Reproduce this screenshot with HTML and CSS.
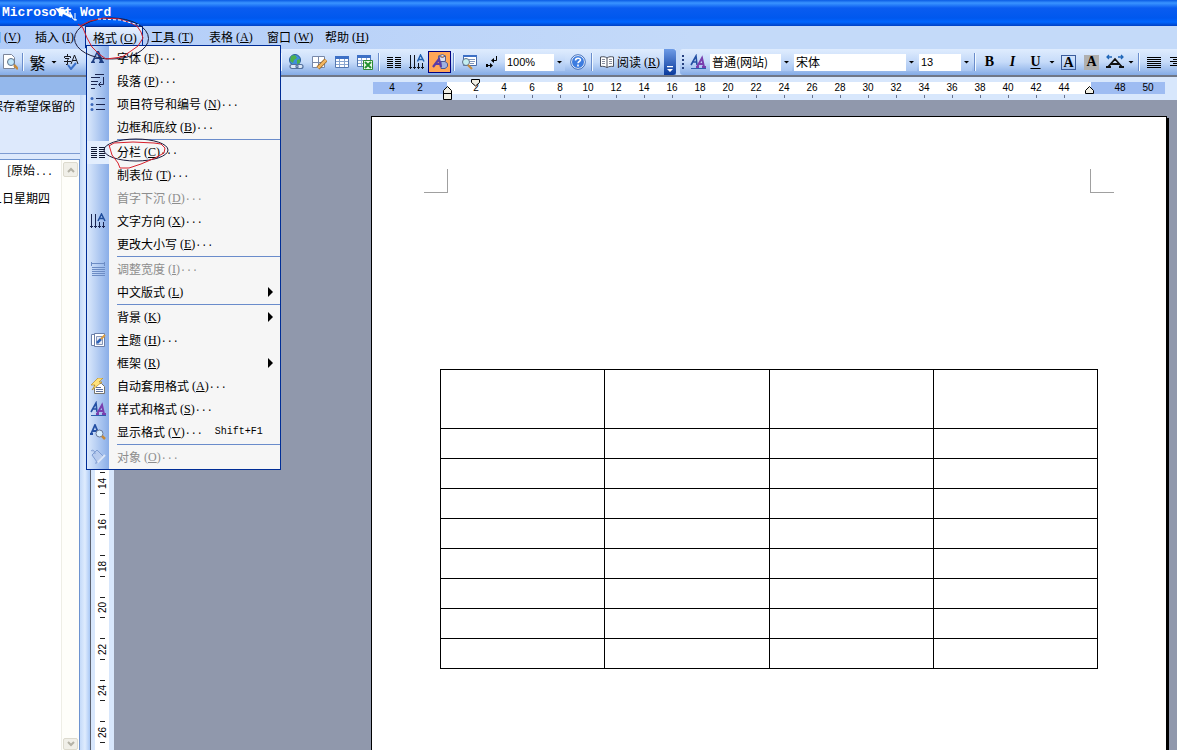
FILE: index.html
```
<!DOCTYPE html>
<html lang="zh-CN">
<head>
<meta charset="utf-8">
<title>Microsoft Word</title>
<link rel="stylesheet" href="styles.css">
</head>
<body>
<header class="titlebar"><h1>Microsoft Word</h1></header>

<nav class="menubar">
  <div class="menubar-item"><button>图<span class="key">(<u>V</u>)</span></button></div>
  <div class="menubar-item"><button>插入<span class="key">(<u>I</u>)</span></button></div>
  <div class="menubar-item open"><button>格式<span class="key">(<u>O</u>)</span></button>
    <div class="menu">
      <button><span class="ico"><svg viewBox="0 0 16 16"><path fill="#1f3f84" d="M1 13v-1l1-1 5-10h2l4 10 1 1v1H9v-1l1-1-1-2H5l-1 2 1 1v1zM5 8h4L7 4z"/></svg></span>字体<span class="key">(<u>F</u>)</span><span class="dots">...</span></button>
      <button><span class="ico"><svg viewBox="0 0 16 16"><path fill="none" stroke="#1a2550" d="M5 1.500h9M1 4.500h9M1 8.500h7M1 11.500h6M5 15.500h-4M13.500 4v7.500H9M11 9l-2.500 2.500L11 14"/></svg></span>段落<span class="key">(<u>P</u>)</span><span class="dots">...</span></button>
      <button><span class="ico"><svg viewBox="0 0 16 16"><path stroke="#1a2550" d="M6 2.500h9M6 8.500h9M6 13.500h9"/><g fill="#3c68ba"><circle cx="2" cy="2.500" r="1.500"/><circle cx="2" cy="8.500" r="1.500"/><circle cx="2" cy="13.500" r="1.500"/></g></svg></span>项目符号和编号<span class="key">(<u>N</u>)</span><span class="dots">...</span></button>
      <button>边框和底纹<span class="key">(<u>B</u>)</span><span class="dots">...</span></button>
      <hr>
      <button class="current"><span class="ico"><svg viewBox="0 0 16 16"><path stroke="#101830" d="M1 3.500h6M1 5.500h6M1 7.500h6M1 9.500h6M1 11.500h6M1 13.500h6M9 3.500h6M9 5.500h6M9 7.500h6M9 9.500h6M9 11.500h6M9 13.500h6"/></svg></span>分栏<span class="key">(<u>C</u>)</span><span class="dots">...</span></button>
      <button>制表位<span class="key">(<u>T</u>)</span><span class="dots">...</span></button>
      <button disabled>首字下沉<span class="key">(<u>D</u>)</span><span class="dots">...</span></button>
      <button><span class="ico"><svg viewBox="0 0 16 16"><path fill="none" stroke="#1a2550" d="M1.500 1v14M5.500 1v14M9.500 9v6M13.500 9v6M0 13.500h3M4 13.500h3M8 13.500h3M12 13.500h3"/><path fill="none" stroke="#1f4d9c" stroke-width="1.500" d="M8 8l3.500-7L15 8M9.500 5.500h4"/></svg></span>文字方向<span class="key">(<u>X</u>)</span><span class="dots">...</span></button>
      <button>更改大小写<span class="key">(<u>E</u>)</span><span class="dots">...</span></button>
      <hr>
      <button disabled><span class="ico"><svg viewBox="0 0 16 16"><path fill="none" stroke="#6c8cc4" d="M1.500 1v4M14.500 1v4M2 2.500h12M2 6.500h13M2 8.500h13M2 10.500h13M2 12.500h13M2 14.500h13"/></svg></span>调整宽度<span class="key">(<u>I</u>)</span><span class="dots">...</span></button>
      <button class="sub">中文版式<span class="key">(<u>L</u>)</span></button>
      <hr>
      <button class="sub">背景<span class="key">(<u>K</u>)</span></button>
      <button><span class="ico"><svg viewBox="0 0 16 16"><path fill="#fff" stroke="#6b7fa8" d="M1.500 2.500h3v11h-3zM4.500 1.500h10v13h-10z"/><path fill="#e8ecf6" stroke="#8796b8" d="M6.500 4.500h6v8h-6z"/><path stroke="#2d62b8" stroke-width="2.500" d="M7 11l4-4"/><path stroke="#d99a3e" stroke-width="2" d="M11 7l4-4"/></svg></span>主题<span class="key">(<u>H</u>)</span><span class="dots">...</span></button>
      <button class="sub">框架<span class="key">(<u>R</u>)</span></button>
      <button><span class="ico"><svg viewBox="0 0 16 16"><path fill="#fff" stroke="#77746a" d="M4.500 5.500h7l3 3v7h-10z"/><path stroke="#5b6f9c" d="M6 9.500h5M6 11.500h7M6 13.500h7"/><path fill="#ffe27a" stroke="#b98a1e" stroke-width=".7" d="M8 0h5L9 4h3L2 12l3-5H1z"/></svg></span>自动套用格式<span class="key">(<u>A</u>)</span><span class="dots">...</span></button>
      <button><span class="ico"><svg viewBox="0 0 16 16"><path fill="none" stroke="#2450a4" stroke-width="1.600" d="M1 11l5-9 1 9M3 8h4"/><path fill="none" stroke="#7a3fae" stroke-width="2" d="M7 13l5-9 2 9M9 10h5M6 13h3M12 13h4"/><path stroke="#2d5fae" d="M1 14.500h15"/></svg></span>样式和格式<span class="key">(<u>S</u>)</span><span class="dots">...</span></button>
      <button><span class="ico"><svg viewBox="0 0 16 16"><path fill="none" stroke="#2450a4" stroke-width="1.800" d="M1 10l4-9 3 7M3 7h4M0 10h3"/><circle cx="9.500" cy="9.500" r="3.500" fill="#d9efff" stroke="#6a7896"/><path stroke="#c58a3a" stroke-width="2.500" d="M12 12l3 3"/></svg></span>显示格式<span class="key">(<u>V</u>)</span><span class="dots">...</span><kbd>Shift+F1</kbd></button>
      <hr>
      <button disabled><span class="ico"><svg viewBox="0 0 16 16"><path fill="#b7cbee" stroke="#7f9dd2" d="M2 6l5-5 6 6-6 6zM1 2c2-2 4 0 4 3"/><path stroke="#dce7f8" stroke-width="2" d="M7 14l8-8"/><path fill="#8aa5d6" d="M5 15l1-3 2 2z"/></svg></span>对象<span class="key">(<u>O</u>)</span><span class="dots">...</span></button>
    </div>
  </div>
  <div class="menubar-item"><button>工具<span class="key">(<u>T</u>)</span></button></div>
  <div class="menubar-item"><button>表格<span class="key">(<u>A</u>)</span></button></div>
  <div class="menubar-item"><button>窗口<span class="key">(<u>W</u>)</span></button></div>
  <div class="menubar-item"><button>帮助<span class="key">(<u>H</u>)</span></button></div>
</nav>

<div class="toolbars">
  <div class="toolbar standard">
    <button class="tool first" aria-label="打印预览"><svg viewBox="0 0 16 16"><path fill="#fff" stroke="#7c8599" d="M1.500.5h8l3 3v11h-11z"/><circle cx="9" cy="8" r="3.500" fill="#bfe6fa" stroke="#5e7088"/><path stroke="#c58a3a" stroke-width="2.500" d="M12 11l4 4"/></svg></button>
    <span class="sep"></span>
    <button class="tool trad" aria-label="中文简繁转换">繁</button>
    <button class="drop" aria-label="更多"></button>
    <button class="tool" aria-label="拼写和语法"><svg viewBox="0 0 16 16"><path fill="none" stroke="#16181f" d="M4.500 0v2M1.500 4V2.500h6V4M2 4.500h4L4.500 6v4.500H3M1 7.500h7M8 10l3.500-9L15 10M9.500 6.500h4"/><path fill="none" stroke="#3a70c8" stroke-width="2" d="M5 11l3 4 5-6"/></svg></button>
    <span class="covered"></span>
    <span class="sep"></span>
    <button class="tool" aria-label="超链接"><svg viewBox="0 0 16 16"><circle cx="7" cy="6" r="5.500" fill="#3f8edb" stroke="#2a5f9a"/><path fill="#4cb04c" d="M3 2l4-1 2 3-3 2-1 3-3-2zM9 6l3-1v4l-3 1z"/><path fill="#dce8f8" stroke="#53709c" stroke-width="1.200" d="M4 10.500h4a2 2 0 010 4H4a2 2 0 010-4zM10 10.500h3a2 2 0 010 4h-3a2 2 0 010-4z"/></svg></button>
    <button class="tool" aria-label="表格和边框"><svg viewBox="0 0 16 16"><path fill="#fff" stroke="#7888a8" d="M1.500 2.500h12v11h-12zM7.500 2.500v11M1.500 8.500h12"/><path stroke="#8a5a20" stroke-width="4" d="M7 14l8-8"/><path stroke="#f2b661" stroke-width="2.500" d="M7 14l8-8"/></svg></button>
    <button class="tool" aria-label="插入表格"><svg viewBox="0 0 16 16"><path fill="#fff" stroke="#5477b0" d="M1.500 2.500h13v11h-13z"/><path fill="#3d70c6" d="M1 2h14v3H1z"/><path stroke="#8aa6d0" d="M5.500 5v8M10.500 5v8M2 7.500h12M2 10.500h12"/></svg></button>
    <button class="tool" aria-label="插入 Excel 工作表"><svg viewBox="0 0 16 16"><path fill="#fff" stroke="#5477b0" d="M.5 1.500h13v11H.5z"/><path fill="#3d70c6" d="M0 1h14v3H0z"/><path stroke="#8aa6d0" d="M4.500 4v8M9.500 4v8M1 6.500h12M1 9.500h12"/><path fill="#effaeb" stroke="#2d8a34" d="M6.500 6.500h9v9h-9z"/><path stroke="#249130" stroke-width="2" d="M8 8l6 6M14 8l-6 6"/></svg></button>
    <span class="sep"></span>
    <button class="tool" aria-label="分栏"><svg viewBox="0 0 16 16"><path stroke="#000" d="M1 3.500h6M1 5.500h6M1 7.500h6M1 9.500h6M1 11.500h6M1 13.500h6M9 3.500h6M9 5.500h6M9 7.500h6M9 9.500h6M9 11.500h6M9 13.500h6"/></svg></button>
    <button class="tool" aria-label="更改文字方向"><svg viewBox="0 0 16 16"><path fill="none" stroke="#10151f" d="M1.500 1v14M5.500 1v14M9.500 9v6M13.500 9v6M0 13.500h3M4 13.500h3M8 13.500h3M12 13.500h3"/><path fill="none" stroke="#1f5fb0" stroke-width="1.500" d="M8.500 7.500l3-6.500L15 7.500M10 5.500h4"/></svg></button>
    <button class="tool pressed" aria-label="绘图"><svg viewBox="0 0 16 16"><path fill="#d9ddf0" stroke="#5a628c" d="M6.500 2l4-1.500 3 1.500v5l-3 1-4-1zM6.500 2l4 1.500 3-1.500"/><path fill="#9fb0e0" stroke="#4c5a94" d="M9 7.500h4l2.500 2v3l-2.500 2H9z"/><path fill="none" stroke="#5a3ca8" stroke-width="2.200" d="M1 13l6-8 2 8M4 10h4"/></svg></button>
    <span class="sep"></span>
    <button class="tool" aria-label="文档结构图"><svg viewBox="0 0 16 16"><path fill="#fff" stroke="#4a6ca8" d="M2.500 1.500h13v10h-13z"/><path fill="#3d70c6" d="M2 1h14v2H2z"/><path stroke="#7f96bd" d="M8 5.500h6M9 7.500h5M9 9.500h4"/><circle cx="5" cy="8" r="3.500" fill="#c4eef0" stroke="#5e7088"/><path stroke="#c58a3a" stroke-width="2.200" d="M7 11l4 4"/></svg></button>
    <button class="tool" aria-label="显示编辑标记"><svg viewBox="0 0 16 16"><path fill="none" stroke="#000" d="M12.500 2v4.500H8M2 11.500h6"/><path d="M10 4v5L7 6.500zM6 9v5l3-2.500zM2 10h2v3H2z"/></svg></button>
    <label class="combo zoom"><select aria-label="显示比例"><option>100%</option></select></label>
    <button class="tool" aria-label="帮助"><svg viewBox="0 0 16 16"><circle cx="8" cy="8" r="6.500" fill="#3c7ce0" stroke="#fff"/><circle cx="8" cy="8" r="7.300" fill="none" stroke="#2355ac" stroke-width=".8"/><path fill="none" stroke="#fff" stroke-width="1.600" d="M5.500 6.500c0-3 5-3 5-.5 0 1.500-2.500 1.500-2.500 3.200M8 10.500v2"/></svg></button>
    <span class="sep"></span>
    <button class="read"><svg viewBox="0 0 16 16"><path fill="#fff" stroke="#4a4f5c" d="M8 4c-2-1.500-4-1.500-6.500-1v9.500c2.500-.5 4.500 0 6.500 1 2-1 4-1.500 6.500-1V3C12 2.500 10 2.500 8 4v9.500"/><path stroke="#8a90a0" d="M3 5.500h3M3 7.500h3M3 9.500h3M10 5.500h3M10 7.500h3M10 9.500h3"/></svg>阅读<span class="key">(<u>R</u>)</span></button>
    <button class="cap" aria-label="工具栏选项"></button>
  </div>
  <div class="toolbar formatting">
    <span class="grip"></span>
    <button class="tool" aria-label="格式窗格"><svg viewBox="0 0 16 16"><path fill="none" stroke="#2450a4" stroke-width="1.600" d="M1 11l5-9 1 9M3 8h4"/><path fill="none" stroke="#7a3fae" stroke-width="2" d="M7 13l5-9 2 9M9 10h5M6 13h3M12 13h4"/><path stroke="#2d5fae" d="M1 14.500h15"/></svg></button>
    <label class="combo style"><select aria-label="样式"><option>普通(网站)</option></select></label>
    <label class="combo font"><select aria-label="字体"><option>宋体</option></select></label>
    <label class="combo size"><select aria-label="字号"><option>13</option></select></label>
    <span class="sep"></span>
    <button class="tool letter bold">B</button>
    <button class="tool letter italic">I</button>
    <button class="tool letter under">U</button>
    <button class="drop" aria-label="下划线样式"></button>
    <button class="tool letter"><span class="boxed">A</span></button>
    <button class="tool letter"><span class="shaded">A</span></button>
    <button class="tool" aria-label="字符缩放"><svg class="wide" viewBox="0 0 18 16"><path fill="none" stroke="#111" stroke-width="1.800" d="M2 13l7-8 7 8M5 10h8M0 13h5M13 13h5"/><path fill="none" stroke="#1f66b8" stroke-width="1.300" d="M1 3h5M3 1L1 3l2 2M12 3h5M15 1l2 2-2 2"/></svg></button>
    <button class="drop" aria-label="缩放比例"></button>
    <span class="sep"></span>
    <button class="tool" aria-label="两端对齐"><svg viewBox="0 0 16 16"><path stroke="#000" d="M1 3.500h14M1 5.500h14M1 7.500h14M1 9.500h14M1 11.500h14M1 13.500h14"/></svg></button>
    <button class="tool" aria-label="居中"><svg viewBox="0 0 16 16"><path stroke="#000" d="M1 3.500h14M4 5.500h8M1 7.500h14M4 9.500h8M1 11.500h14"/></svg></button>
  </div>
</div>

<div class="workspace">
  <aside class="pane">
    <div class="pane-head"></div>
    <p class="pane-tip"><span>保存希望保留的</span></p>
    <div class="pane-list">
      <div class="pane-files">
        <p><span>[原始<span class="dots">...</span></span></p>
        <p><span>1日星期四</span></p>
      </div>
      <div class="scroll">
        <button aria-label="向上滚动"><svg viewBox="0 0 8 6"><path d="M1 5l3-3 3 3"/></svg></button>
        <button aria-label="向下滚动"><svg viewBox="0 0 8 6"><path d="M1 1l3 3 3-3"/></svg></button>
      </div>
    </div>
  </aside>
  <main class="editor">
    <div class="ruler">
      <div class="margin left"><i>4</i><i>2</i></div>
      <div class="measure"><i>2</i><i>4</i><i>6</i><i>8</i><i>10</i><i>12</i><i>14</i><i>16</i><i>18</i><i>20</i><i>22</i><i>24</i><i>26</i><i>28</i><i>30</i><i>32</i><i>34</i><i>36</i><i>38</i><i>40</i><i>42</i><i>44</i>
        <svg class="mark hanging" viewBox="0 0 10 16"><path d="M.5 14.500v-9L4.500 1.500l4 4v9zM.5 8.500h8"/></svg>
        <svg class="mark indent" viewBox="0 0 10 8"><path d="M.5.5h8v3l-4 3.500-4-3.500z"/></svg>
        <svg class="mark right" viewBox="0 0 10 8"><path d="M.5 7.500v-3L4.500.5l4 4v3z"/></svg>
      </div>
      <div class="margin"><i>48</i><i>50</i></div>
    </div>
    <div class="view">
      <div class="vruler"><div class="vscale"><i>14</i><i>16</i><i>18</i><i>20</i><i>22</i><i>24</i><i>26</i></div></div>
      <div class="canvas">
        <article class="page">
          <div class="corners"><span class="corner"></span><span class="corner mirror"></span></div>
          <table>
            <tr class="tall"><td></td><td></td><td></td><td></td></tr>
            <tr><td></td><td></td><td></td><td></td></tr>
            <tr><td></td><td></td><td></td><td></td></tr>
            <tr><td></td><td></td><td></td><td></td></tr>
            <tr><td></td><td></td><td></td><td></td></tr>
            <tr><td></td><td></td><td></td><td></td></tr>
            <tr><td></td><td></td><td></td><td></td></tr>
            <tr><td></td><td></td><td></td><td></td></tr>
            <tr><td></td><td></td><td></td><td></td></tr>
          </table>
        </article>
      </div>
    </div>
  </main>
</div>

<svg class="ink" viewBox="0 0 180 180">
  <path fill="#fff" stroke="none" d="M55 8l13 2-3 2 8 4-2 2-8-4-1 3z"/>
  <path stroke="#fff" d="M66 9l6 7M70 12l3 7 4 1M75 13v8"/>
  <ellipse class="black" cx="111.500" cy="38.500" rx="37" ry="20.500"/>
  <path class="red" d="M78 24L83 28 87 38 92 47 99 54 106 59 122 57 131 51 138 46 143 38 141 32 137 26 131 23 119 19 104 18 90 21 80 26"/>
  <path stroke="#fff" stroke-dasharray="3 2" d="M98 19L120 20 139 25"/>
  <ellipse class="black" cx="136" cy="150" rx="32" ry="11"/>
  <path class="red" d="M109 145L112 155 118 163 120 168 129 168 141 164 155 158 164 153 165 148 161 144 154 143 133 142 114 143 109 146"/>
</svg>
</body>
</html>
```
FILE: styles.css
```
* { box-sizing: border-box; }

body {
  margin: 0;
  height: 100vh;
  display: flex;
  flex-direction: column;
  overflow: hidden;
  position: relative;
  background: #9098ac;
  color: #000;
  font: 12px/16px "Noto Sans CJK SC", sans-serif;
}

button, select {
  font: inherit;
  color: inherit;
  border: 0;
  padding: 0;
  margin: 0;
  background: none;
}

svg { display: block; width: 16px; height: 16px; flex: none; }

.key { margin-left: 3px; font: 12px/16px "Liberation Serif", serif; }
.key u { text-underline-offset: 1px; }
.dots, kbd { font: 10px/16px "Liberation Mono", monospace; }

.titlebar {
  flex: none;
  height: 26px;
  background: linear-gradient(#0a5be4, #3a94ff 3px, #0a5cf0 8px, #0058ee 18px, #0066ff 22px, #0040c4);
}
.titlebar h1 {
  margin: 0;
  padding-left: 2px;
  color: #fff;
  font: bold 13px/26px "Liberation Mono", monospace;
}

.menubar {
  flex: none;
  display: flex;
  height: 23px;
  margin-left: -31px;
  background: linear-gradient(90deg, #b0cbf8, #c4daf9 60%);
}
.menubar-item { position: relative; width: 58px; }
.menubar-item > button {
  display: flex;
  align-items: center;
  width: 100%;
  height: 22px;
  padding-left: 8px;
  white-space: nowrap;
}
.menubar-item:first-child > button { padding-left: 20px; }
.menubar-item.open > button {
  border: 1px solid #002d96;
  border-bottom: 0;
  padding-left: 7px;
  background: linear-gradient(#e8f1ff, #b9d1f6);
}

.menu {
  position: absolute;
  z-index: 5;
  top: 19px;
  left: 1px;
  width: 195px;
  padding-top: 1px;
  border: 1px solid #002d96;
  background: linear-gradient(90deg, #dbe9fc, #8aaee8 22px, #f6f6f6 22px);
}
.menu button {
  position: relative;
  display: flex;
  align-items: center;
  width: 100%;
  height: 23px;
  padding: 0 0 2px 30px;
  text-align: left;
  white-space: nowrap;
}
.menu button:disabled { color: #8d8d8d; }
.menu .ico { position: absolute; left: 3px; top: 3px; }
.menu .current { background: linear-gradient(90deg, #e3eefd 22px, transparent 22px); }
.menu kbd { margin-left: 12px; }
.menu hr { height: 1px; margin: 0 0 1px 30px; border: 0; background: #6a8ccb; }
.sub::after {
  content: "";
  margin-left: auto;
  margin-right: 7px;
  border: 5px solid transparent;
  border-left-color: #000;
  border-right: 0;
}

.toolbars {
  flex: none;
  display: flex;
  gap: 4px;
  height: 28px;
  border-bottom: 2px solid #6f7787;
  background: #c4daf9;
}
.toolbar {
  display: flex;
  align-items: center;
  background: linear-gradient(#dfecfe, #c6dbf9 50%, #84abe6);
}
.formatting { flex: 1; min-width: 0; border-radius: 3px 0 0 3px; }
.tool {
  flex: none;
  display: flex;
  align-items: center;
  justify-content: center;
  width: 23px;
  height: 22px;
}
.tool.first { width: 20px; }
.tool.trad { font-size: 16px; }
.tool.pressed { border: 1px solid #000080; background: #ffa657; }
.tool svg.wide { width: 18px; }
.sep {
  flex: none;
  width: 2px;
  height: 18px;
  margin: 0 2px;
  border-left: 1px solid #6a8ccb;
  border-right: 1px solid #f1f9ff;
}
.drop { flex: none; width: 10px; height: 22px; }
.drop::after, .combo::after {
  content: "";
  display: block;
  width: 6px;
  height: 3px;
  margin: auto;
  background: #000;
  clip-path: polygon(0 0, 100% 0, 50% 100%);
}
.covered { flex: none; width: 196px; }

.combo {
  flex: none;
  display: grid;
  grid-template-columns: 1fr 11px;
  align-items: center;
  height: 17px;
  margin-right: 2px;
  background: linear-gradient(#d5e5fc, #aac7f2) right / 11px 100% no-repeat #fff;
}
.combo select {
  appearance: none;
  width: 100%;
  height: 17px;
  padding-left: 2px;
  outline: 0;
}
.combo.zoom { width: 60px; margin: 0 1px 0 2px; }
.combo.style { width: 82px; margin-left: 1px; }
.combo.font { width: 123px; }
.combo.size { width: 53px; margin-right: 0; }
.zoom select, .size select { font: 11px/16px "Liberation Sans", sans-serif; }

.read {
  flex: none;
  display: flex;
  align-items: center;
  width: 69px;
  height: 22px;
  padding-left: 4px;
}
.read svg { margin-right: 2px; }
.cap {
  flex: none;
  width: 12px;
  height: 26px;
  display: grid;
  place-content: end center;
  padding-bottom: 3px;
  border-radius: 0 3px 3px 0;
  background: linear-gradient(#6d9be6, #0a3a9c);
}
.cap::after {
  content: "";
  width: 6px;
  height: 6px;
  background: #fff;
  clip-path: polygon(0 0, 100% 0, 100% 20%, 0 20%, 0 50%, 100% 50%, 50% 100%, 0 50%);
}
.grip {
  flex: none;
  width: 2px;
  height: 15px;
  margin: 0 2px;
  background: repeating-linear-gradient(#27417f 0 2px, transparent 2px 4px);
}
.letter { font: bold 14px/18px "Liberation Serif", serif; }
.italic { font-style: italic; }
.under { text-decoration: underline; text-underline-offset: 2px; }
.boxed, .shaded { width: 15px; height: 15px; line-height: 14px; text-align: center; }
.boxed { border: 1px solid #3a5c9c; }
.shaded { background: #b0b0b0; }

.workspace { flex: 1; min-height: 0; display: flex; }

.pane {
  flex: none;
  display: flex;
  flex-direction: column;
  width: 90px;
  padding-right: 10px;
  background: linear-gradient(90deg, #dde9fc 80px, #c4daf9 80px, #dfecfe 85px, #a9c8f5 90px);
}
.pane-head { height: 18px; margin-right: -10px; background: #94b8ec; }
.pane p {
  display: flex;
  justify-content: flex-end;
  margin: 0;
  overflow: hidden;
  white-space: nowrap;
}
.pane p > span { flex: none; }
.pane .pane-tip { height: 59px; padding: 3px 5px 0 0; border-bottom: 1px solid #7c9bd2; }
.pane-list {
  flex: 1;
  display: flex;
  margin-top: 5px;
  border: solid #6d93cf;
  border-width: 1px 1px 0 0;
  background: #fff;
}
.pane-files { flex: 1; min-width: 0; padding-top: 2px; }
.pane-files p { height: 28px; padding-right: 8px; }
.pane-files p + p { padding-right: 11px; }
.scroll {
  display: flex;
  flex-direction: column;
  justify-content: space-between;
  width: 18px;
  padding: 2px 1px 0;
  border-left: 1px solid #eeeee6;
  background: #fefefa;
}
.scroll button {
  display: grid;
  place-items: center;
  height: 15px;
  border: 1px solid #dcdace;
  border-radius: 2px;
  background: #f0efe8;
}
.scroll svg { width: 8px; height: 6px; fill: none; stroke: #b4b2a6; stroke-width: 2; }
.scroll button:last-child { height: 12px; }

.editor { flex: 1; min-width: 0; display: flex; flex-direction: column; }
.ruler {
  flex: none;
  display: flex;
  height: 23px;
  padding: 5px 12px 6px 283px;
  background: #d8e7fc;
}
i { font: 10px/12px "Liberation Sans", sans-serif; }
.ruler i { position: relative; flex: none; width: 28px; text-align: center; }
.margin { display: flex; flex: none; width: 74px; padding-left: 15px; background: #9ebcf2; }
.margin.left { padding-left: 5px; }
.measure { position: relative; flex: 1; display: flex; padding-left: 15px; background: #fff; }
.measure i::after {
  content: "";
  position: absolute;
  left: 14px;
  top: 13px;
  width: 1px;
  height: 3px;
  background: #66708a;
}
.mark { position: absolute; width: 10px; height: 8px; fill: #f1efe4; stroke: #000; }
.hanging { left: -4px; top: 3px; height: 16px; }
.indent { left: 24px; top: -3px; }
.right { right: -4px; top: 4px; }

.view { flex: 1; min-height: 0; display: flex; }
.vruler {
  flex: none;
  width: 24px;
  padding: 362px 5px 0;
  border-left: 1px solid #5c6270;
  background: linear-gradient(90deg, #d8e7fc 4px, #fff 4px 18px, #d8e7fc 18px);
}
.vscale { display: grid; grid-auto-rows: 42px 41px; justify-items: center; }
.vscale i {
  display: flex;
  align-items: center;
  justify-content: space-between;
  writing-mode: vertical-rl;
  transform: rotate(180deg);
  padding: 10px 0;
}
.vscale i::before, .vscale i::after { content: ""; width: 5px; height: 1px; background: #222; }

.canvas { flex: 1; min-width: 0; display: flex; padding: 16px 10px 0 257px; overflow: hidden; }
.page {
  flex: 1;
  padding-top: 52px;
  border: 1px solid #000;
  border-bottom: 0;
  background: #fff;
  box-shadow: 2px 2px #000;
}
.corners { display: flex; justify-content: space-between; padding: 0 52px; }
.corner { width: 24px; height: 24px; border: solid #a0a0a0; border-width: 0 1px 1px 0; }
.corner.mirror { border-width: 0 0 1px 1px; }
table {
  width: calc(100% - 136px);
  margin: 176px 68px 0;
  border-collapse: collapse;
  table-layout: fixed;
}
td { height: 30px; padding: 0; border: 1px solid #000; }
.tall td { height: 59px; }

/* Pen annotations over the menu */
.ink {
  position: absolute;
  z-index: 10;
  left: 0;
  top: 0;
  width: 180px;
  height: 180px;
  fill: none;
  pointer-events: none;
}
.black { stroke: #1a1a3a; }
.red { stroke: #d8202c; }
```
